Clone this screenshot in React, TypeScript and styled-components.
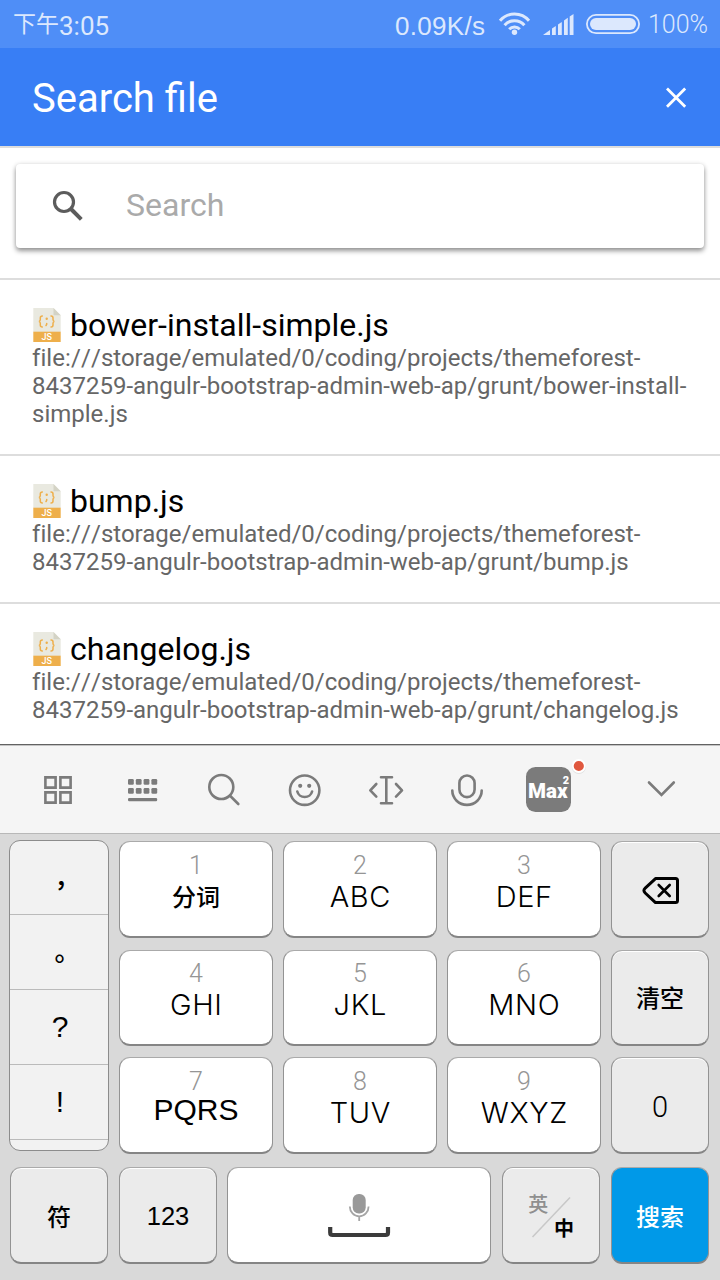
import React from "react";
import styled, { createGlobalStyle, css } from "styled-components";

const GlobalStyle = createGlobalStyle`
  * { box-sizing: border-box; }
  body { margin: 0; background: #fff; font-family: Roboto, "Noto Sans CJK SC", sans-serif; }
`;

const Screen = styled.div`
  width: 720px;
  height: 1280px;
  display: flex;
  flex-direction: column;
  overflow: hidden;
`;

const StatusBar = styled.div`
  flex: none;
  height: 48px;
  padding: 2px 12px 0 13px;
  background: #4f8ef7;
  color: #dce8fd;
  display: flex;
  align-items: center;
`;

const StatusText = styled.span<{ $size: number; $width?: number; $family?: string; $light?: boolean; $spacing?: number; $drop?: number }>`
  font-family: ${(p) => p.$family ?? "Roboto"}, "Noto Sans CJK SC", sans-serif;
  font-weight: ${(p) => (p.$light ? 300 : 400)};
  font-size: ${(p) => p.$size}px;
  letter-spacing: ${(p) => p.$spacing ?? 0}px;
  line-height: 46px;
  margin-top: ${(p) => p.$drop ?? 0}px;
  white-space: nowrap;
  ${(p) => p.$width && css`width: ${p.$width}px;`}
`;

const StatusRight = styled.div`
  margin-left: auto;
  height: 46px;
  display: flex;
  align-items: center;
`;

const StatusIconSvg = styled.svg`
  margin-top: -2px;
`;

const Header = styled.header`
  flex: none;
  height: 100px;
  padding: 0 28px 0 32px;
  background: #387ef5;
  border-bottom: 2px solid #ddd;
  display: flex;
  align-items: center;
  justify-content: space-between;
  color: #fff;
`;

const Title = styled.h1`
  margin: 4px 0 0;
  font-size: 40px;
  font-weight: 400;
  line-height: 48px;
`;

const SearchSection = styled.div`
  flex: none;
  height: 130px;
  padding: 16px;
`;

const SearchBox = styled.div`
  height: 84px;
  border-radius: 4px;
  background: #fff;
  box-shadow: 0 3px 5px rgba(0, 0, 0, 0.4), 0 0 5px rgba(0, 0, 0, 0.1);
  display: flex;
  align-items: center;
  padding-left: 36px;
  gap: 42px;
`;

const Placeholder = styled.span`
  margin-bottom: 2px;
  font-size: 32px;
  line-height: 38px;
  color: #aaa;
`;

const FileList = styled.div`
  flex: none;
  height: 466px;
  overflow: hidden;
`;

const FileRow = styled.div`
  border-top: 2px solid #ddd;
  padding: 26px 32px;
`;

const FileName = styled.div`
  height: 38px;
  display: flex;
  align-items: center;
  gap: 9px;
  font-size: 32px;
  line-height: 38px;
  color: #000;
`;

const FilePath = styled.div`
  font-size: 24px;
  line-height: 28px;
  font-variant-ligatures: none;
  color: #666;
`;

const Scheme = styled.span`
  font-kerning: none;
  letter-spacing: 0.08px;
`;

const Keyboard = styled.div`
  flex: none;
  height: 536px;
  background: #d9d9d9;
  border-top: 1px solid #626262;
  display: flex;
  flex-direction: column;
`;

const Toolbar = styled.div`
  height: 89px;
  padding-left: 21px;
  background: #f5f5f5;
  border-top: 1px solid #c4c4c4;
  border-bottom: 1px solid #b8b8b8;
  display: flex;
`;

const ToolSlot = styled.svg<{ $last?: boolean }>`
  flex: none;
  width: ${(p) => (p.$last ? 118 : 81)}px;
  height: 87px;
  margin-left: ${(p) => (p.$last ? 14 : 0)}px;
  overflow: visible;
  fill: none;
  stroke: #7b7b7b;
  stroke-width: 2.6;
  stroke-linecap: round;
  stroke-linejoin: round;
`;

const MainKeys = styled.div`
  height: 333px;
  padding: 6px 11px 0 9px;
  display: flex;
  gap: 10px;
`;

const Punctuation = styled.div`
  width: 100px;
  height: 311px;
  border: 1px solid #8c8c8c;
  border-radius: 11px;
  background: #f2f2f2;
  overflow: hidden;
`;

const PunctuationKey = styled.div<{ $cjk: boolean }>`
  height: 75px;
  border-bottom: 1px solid #bbb;
  display: flex;
  align-items: center;
  justify-content: center;
  font-family: "Liberation Sans", "Noto Sans CJK SC", sans-serif;
  font-size: ${(p) => (p.$cjk ? 26 : 30)}px;
  font-weight: ${(p) => (p.$cjk ? 500 : 400)};
  padding: ${(p) => (p.$cjk ? "0 0 5px 17px" : "0 0 1px 2px")};
  color: #000;

  &:first-child {
    height: 74px;
  }
`;

const KeyGrid = styled.div`
  padding-top: 1px;
  display: grid;
  grid-template-columns: 154px 154px 154px 98px;
  grid-template-rows: 97px 96px 97px;
  column-gap: 10px;
  row-gap: 11.5px;
  align-content: start;
`;

const BottomKeys = styled.div`
  padding-left: 10px;
  display: grid;
  grid-template-columns: 98px 98px 263px 98px 98px;
  grid-template-rows: 97px;
  column-gap: 11px;
`;

const Key = styled.div<{ $tone?: "white" | "grey" | "blue" }>`
  border: 1px solid #939393;
  border-top-color: #aaa;
  border-bottom: 2px solid #858585;
  border-radius: 11px;
  background: ${(p) => (p.$tone === "blue" ? "#0099e8" : p.$tone === "grey" ? "#ebebeb" : "#fff")};
  ${(p) => p.$tone === "grey" && css`box-shadow: inset 0 1px 0 #fff;`}
  color: ${(p) => (p.$tone === "blue" ? "#fff" : "#000")};
  display: flex;
  flex-direction: column;
  align-items: center;
  justify-content: center;
`;

const SpaceKey = styled(Key)`
  margin-left: -1px;
`;

const KeyDigit = styled.span`
  padding-top: 2px;
  font-family: Roboto, sans-serif;
  font-weight: 300;
  font-size: 25px;
  line-height: 28px;
  color: #959595;
`;

const KeyLetters = styled.span<{ $wide?: boolean }>`
  margin-top: ${(p) => (p.$wide ? -3 : 0)}px;
  margin-bottom: ${(p) => (p.$wide ? 17 : 14)}px;
  font-family: ${(p) => (p.$wide ? '"Liberation Sans"' : "Inter")}, sans-serif;
  font-weight: 300;
  font-size: ${(p) => (p.$wide ? 30 : 29)}px;
  letter-spacing: ${(p) => (p.$wide ? 0 : 0.6)}px;
  margin-right: ${(p) => (p.$wide ? 0 : -0.6)}px;
  line-height: 34px;
`;

const KeyWord = styled.span<{ $sub?: boolean; $low?: boolean }>`
  font-family: "Noto Sans CJK SC", sans-serif;
  font-weight: 500;
  font-size: 24px;
  line-height: 34px;
  ${(p) => p.$sub && css`margin: -1px 0 15px;`}
  ${(p) => p.$low && css`margin-top: 2px;`}
`;

const KeyNumber = styled.span<{ $light?: boolean }>`
  margin-top: ${(p) => (p.$light ? 3 : 2)}px;
  font-family: ${(p) => (p.$light ? "Roboto" : '"Liberation Sans"')}, sans-serif;
  font-weight: ${(p) => (p.$light ? 300 : 400)};
  font-size: ${(p) => (p.$light ? 29 : 25.5)}px;
  line-height: 34px;
`;

const DeleteIcon = styled.svg`
  margin-top: 3px;
`;

const CloseIcon = styled.svg`
  margin-top: 2px;
`;

function FileIcon() {
  return (
    <svg width="29" height="34" viewBox="32 308 29 34">
      <path d="M33.3 308H53.5L60.7 315.2V332H33.3Z" fill="#e9e9e0" />
      <path d="M53.5 308L60.7 315.2H53.5Z" fill="#d4d3c5" />
      <rect x="33.3" y="331.7" width="27.4" height="10.3" fill="#eeaf4b" />
      <g fill="none" stroke="#eeaf4b" strokeWidth="1.5" strokeLinecap="round">
        <path d="M42.3 316q-2 0-2 2v1.6q0 1.8-1.5 1.8q1.5 0 1.5 1.8v1.8q0 2 2 2" />
        <path d="M51 316q2 0 2 2v1.6q0 1.8 1.5 1.8q-1.5 0-1.5 1.8v1.8q0 2-2 2" />
        <path d="M46.7 323.5v.8l-.7 1.2" />
      </g>
      <circle cx="46.7" cy="318.7" r="1.2" fill="#eeaf4b" />
      <text x="46.7" y="340.4" textAnchor="middle" fontFamily="Roboto, sans-serif" fontWeight="500" fontSize="9" fill="#fff">JS</text>
    </svg>
  );
}

function StatusIcons() {
  return (
    <StatusIconSvg width="156" height="44" viewBox="492 2 156 44" fill="none" stroke="#dce8fd">
      <g strokeWidth="3">
        <path d="M500 20.8A19 19 0 0 1 529 20.8" />
        <path d="M504.6 25.2A13 13 0 0 1 524.4 25.2" />
        <path d="M509.2 29.2A7.3 7.3 0 0 1 519.8 29.2" />
      </g>
      <circle cx="514.5" cy="32.2" r="2.7" fill="#dce8fd" stroke="none" />
      <g fill="#dce8fd" stroke="none">
        <path d="M543 35L550 30V35Z" />
        <path d="M552 28.6L555.8 26V35H552Z" />
        <path d="M558 24.5L561.8 21.9V35H558Z" />
        <path d="M564 20.4L567.8 17.8V35H564Z" />
        <path d="M569.7 16.5L573.5 14V35H569.7Z" />
      </g>
      <rect x="586.9" y="14.9" width="52.2" height="18.3" rx="9.1" strokeWidth="1.8" />
      <rect x="590" y="18" width="46" height="12" rx="6" fill="#dce8fd" stroke="none" />
    </StatusIconSvg>
  );
}

const files = [
  {
    name: "bower-install-simple.js",
    path: "storage/emulated/0/coding/projects/themeforest-8437259-angulr-bootstrap-admin-web-ap/grunt/bower-install-simple.js",
  },
  {
    name: "bump.js",
    path: "storage/emulated/0/coding/projects/themeforest-8437259-angulr-bootstrap-admin-web-ap/grunt/bump.js",
  },
  {
    name: "changelog.js",
    path: "storage/emulated/0/coding/projects/themeforest-8437259-angulr-bootstrap-admin-web-ap/grunt/changelog.js",
  },
];

function LetterKey({ digit, letters }: { digit: string; letters: string }) {
  return (
    <Key>
      <KeyDigit>{digit}</KeyDigit>
      <KeyLetters $wide={letters === "PQRS"}>{letters}</KeyLetters>
    </Key>
  );
}

export default function App() {
  return (
    <Screen>
      <GlobalStyle />
      <StatusBar>
        <StatusText $size={23}>下午</StatusText>
        <StatusText $size={26} $drop={2}>3:05</StatusText>
        <StatusRight>
          <StatusText $size={26} $width={97} $family='"Liberation Sans"' $spacing={0.3} $drop={2}>0.09K/s</StatusText>
          <StatusIcons />
          <StatusText $size={25} $width={60} $light>100%</StatusText>
        </StatusRight>
      </StatusBar>
      <Header>
        <Title>Search file</Title>
        <CloseIcon width="32" height="32" viewBox="660 82 32 32" stroke="#fff" strokeWidth="2.8">
          <path d="M667 88.5L685.2 106.7M685.2 88.5L667 106.7" />
        </CloseIcon>
      </Header>
      <SearchSection>
        <SearchBox>
          <svg width="32" height="32" viewBox="52 190 32 32" fill="none" stroke="#5c5c5c">
            <circle cx="64" cy="202" r="9.5" strokeWidth="3.2" />
            <path d="M71 209L81.3 219.3" strokeWidth="4" />
          </svg>
          <Placeholder>Search</Placeholder>
        </SearchBox>
      </SearchSection>
      <FileList>
        {files.map((f) => (
          <FileRow key={f.name}>
            <FileName>
              <FileIcon />
              {f.name}
            </FileName>
            <FilePath>
              <Scheme>file:///</Scheme>
              {f.path}
            </FilePath>
          </FileRow>
        ))}
      </FileList>
      <Keyboard>
        <Toolbar>
          <ToolSlot viewBox="21 746 81 87">
            <path strokeLinejoin="miter" d="M45.4 777.4h10.2v10.2h-10.2zM60.4 777.4h10.2v10.2h-10.2zM45.4 792.4h10.2v10.2h-10.2zM60.4 792.4h10.2v10.2h-10.2z" />
          </ToolSlot>
          <ToolSlot viewBox="102 746 81 87">
            <g fill="#7b7b7b" stroke="none">
              {[779, 788].map((y) =>
                [128, 135.8, 143.6, 151.4].map((x) => <rect key={`${x}-${y}`} x={x} y={y} width="5.8" height="5.8" rx="1.3" />),
              )}
              <rect x="128" y="798" width="29.2" height="3.2" rx="1.2" />
            </g>
          </ToolSlot>
          <ToolSlot viewBox="183 746 81 87">
            <circle cx="221.3" cy="787" r="12" />
            <path d="M230.3 796L238.3 804" />
          </ToolSlot>
          <ToolSlot viewBox="264 746 81 87">
            <circle cx="304.7" cy="790.2" r="14.7" />
            <path d="M297.3 791.5a7.6 7.2 0 0 0 14.8 0" />
            <circle cx="300.2" cy="785.8" r="2.1" fill="#7b7b7b" stroke="none" />
            <circle cx="309.2" cy="785.8" r="2.1" fill="#7b7b7b" stroke="none" />
          </ToolSlot>
          <ToolSlot viewBox="345 746 81 87">
            <path d="M381 777.3h11M381 803.3h11M386.3 777.3v26M376.3 784L370.3 790.3L376.3 796.6M396 784L402 790.3L396 796.6" />
          </ToolSlot>
          <ToolSlot viewBox="426 746 81 87">
            <rect x="459.4" y="775.5" width="15.2" height="21.6" rx="7.6" />
            <path d="M452.3 790.6a14.7 14.3 0 0 0 29.4 0" />
          </ToolSlot>
          <ToolSlot viewBox="507 746 81 87">
            <rect x="526" y="767" width="45" height="45" rx="9.5" fill="#7b7b7b" stroke="none" />
            <g fill="#fff" stroke="none" fontFamily="Roboto, sans-serif" fontWeight="900">
              <text x="528" y="798" fontSize="19.5" textLength="39.5" lengthAdjust="spacingAndGlyphs">Max</text>
              <text x="562.8" y="783.5" fontSize="11">2</text>
            </g>
            <circle cx="578.8" cy="767" r="7" fill="#000" fillOpacity="0.08" stroke="none" />
            <circle cx="578.8" cy="766" r="6" fill="#e0583f" stroke="#fff" strokeWidth="1.8" />
          </ToolSlot>
          <ToolSlot $last viewBox="602 746 118 87">
            <path strokeLinejoin="miter" d="M649 782.5L661.5 795L673.8 782.5" />
          </ToolSlot>
        </Toolbar>
        <MainKeys>
          <Punctuation>
            {["，", "。", "?", "!"].map((c) => (
              <PunctuationKey key={c} $cjk={c > "~"}>{c}</PunctuationKey>
            ))}
          </Punctuation>
          <KeyGrid>
            <Key>
              <KeyDigit>1</KeyDigit>
              <KeyWord $sub>分词</KeyWord>
            </Key>
            <LetterKey digit="2" letters="ABC" />
            <LetterKey digit="3" letters="DEF" />
            <Key $tone="grey">
              <DeleteIcon width="40" height="30" viewBox="640 876 40 30" fill="none" stroke="#000" strokeWidth="3" strokeLinejoin="round" strokeLinecap="round">
                <path d="M655.5 878.6H675.5Q677.5 878.6 677.5 880.6V900.6Q677.5 902.6 675.5 902.6H655.5L645.2 893Q642.6 890.6 645.2 888.2Z" />
                <path strokeWidth="2.6" d="M658.7 885L669.7 896M669.7 885L658.7 896" />
              </DeleteIcon>
            </Key>
            <LetterKey digit="4" letters="GHI" />
            <LetterKey digit="5" letters="JKL" />
            <LetterKey digit="6" letters="MNO" />
            <Key $tone="grey">
              <KeyWord>清空</KeyWord>
            </Key>
            <LetterKey digit="7" letters="PQRS" />
            <LetterKey digit="8" letters="TUV" />
            <LetterKey digit="9" letters="WXYZ" />
            <Key $tone="grey">
              <KeyNumber $light>0</KeyNumber>
            </Key>
          </KeyGrid>
        </MainKeys>
        <BottomKeys>
          <Key $tone="grey">
            <KeyWord $low>符</KeyWord>
          </Key>
          <Key $tone="grey">
            <KeyNumber>123</KeyNumber>
          </Key>
          <SpaceKey>
            <svg width="64" height="46" viewBox="327 1192 64 46" fill="none">
              <rect x="352.7" y="1194" width="13" height="19.5" rx="6" fill="#999" />
              <path d="M349.8 1206.5a9.4 9.8 0 0 0 18.8 0M359.2 1217v4" stroke="#a5a5a5" strokeWidth="1.8" />
              <path d="M330.2 1227V1232.5Q330.2 1235 332.7 1235H385.5Q388 1235 388 1232.5V1227" stroke="#3b3b3b" strokeWidth="4.2" />
            </svg>
          </SpaceKey>
          <Key $tone="grey">
            <svg width="54" height="60" viewBox="524 1185 54 60" fontFamily="Noto Sans CJK SC, sans-serif">
              <path d="M532.5 1237L570 1197.5" stroke="#c8c8c8" strokeWidth="1.5" />
              <text x="528.3" y="1212" fontSize="20" fontWeight="500" fill="#8f8f8f">英</text>
              <text x="554" y="1235.5" fontSize="20" fontWeight="700" fill="#000">中</text>
            </svg>
          </Key>
          <Key $tone="blue">
            <KeyWord $low>搜索</KeyWord>
          </Key>
        </BottomKeys>
      </Keyboard>
    </Screen>
  );
}
